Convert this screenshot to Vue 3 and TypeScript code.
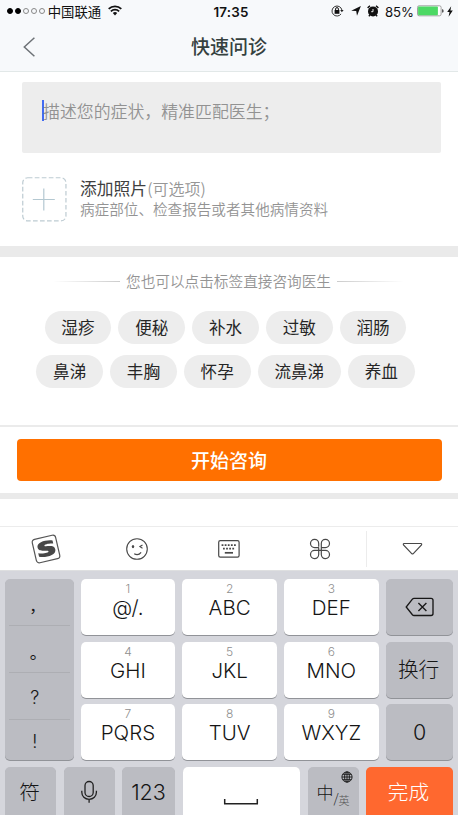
<script setup lang="ts">
interface LetterKey {
  digit: string
  label: string
}

const signal: boolean[] = [true, true, false, false, false]
const tagRows: string[][] = [
  ['湿疹', '便秘', '补水', '过敏', '润肠'],
  ['鼻涕', '丰胸', '怀孕', '流鼻涕', '养血'],
]
const punctuation: string[] = ['，', '。', '?', '!']
const letterKeys: LetterKey[] = [
  { digit: '1', label: '@/.' },
  { digit: '2', label: 'ABC' },
  { digit: '3', label: 'DEF' },
  { digit: '4', label: 'GHI' },
  { digit: '5', label: 'JKL' },
  { digit: '6', label: 'MNO' },
  { digit: '7', label: 'PQRS' },
  { digit: '8', label: 'TUV' },
  { digit: '9', label: 'WXYZ' },
]
</script>

<template>
  <div class="screen">
    <header class="top">
      <div class="status">
        <div class="status-left">
          <span class="dots"><i v-for="(on, i) in signal" :key="i" :class="{ on }"></i></span>
          <span class="carrier">中国联通</span>
          <svg class="wifi" width="14" height="11" viewBox="0 0 14 11">
            <g fill="none" stroke="#111" stroke-width="1.8">
              <path d="M.7 3.9a8.9 8.9 0 0 1 12.6 0" />
              <path d="M2.9 6.3a5.8 5.8 0 0 1 8.2 0" />
            </g>
            <path d="M4.8 8.1a3.1 3.1 0 0 1 4.4 0L7 10.4z" fill="#111" />
          </svg>
        </div>
        <span class="time">17:35</span>
        <div class="status-right">
          <svg width="13" height="12" viewBox="0 0 13 12">
            <path d="M10.1 8.9A5 5 0 1 1 10.9 5" fill="none" stroke="#222" stroke-width=".9" />
            <path d="M9.2 5h3.4L10.9 7.3z" fill="#222" />
            <rect x="3.6" y="5" width="4.8" height="3.8" fill="#111" />
            <path d="M4.6 5.4V4a1.4 1.4 0 0 1 2.8 0v1.4" fill="none" stroke="#111" stroke-width="1" />
          </svg>
          <svg class="locate" width="10" height="10" viewBox="0 0 10 10"><path d="M9.9.1 6 9.7 5.2 4.9.2 4.7z" fill="#111" /></svg>
          <svg class="alarm" width="12" height="12" viewBox="0 0 12 12">
            <circle cx="6" cy="6.4" r="5" fill="#111" />
            <path d="M.7 3A6 6 0 0 1 3.1.9M11.3 3A6 6 0 0 0 8.9.9" fill="none" stroke="#111" stroke-width="1.4" />
            <path d="M1.8 11.2l1.2-1.2M10.2 11.2 9 10" stroke="#111" stroke-width="1.4" />
            <path d="M6 4v2.7H4.2" fill="none" stroke="#fff" stroke-width=".9" />
          </svg>
          <span class="percent">85%</span>
          <svg width="27" height="12" viewBox="0 0 27 12">
            <rect x=".5" y=".8" width="23.6" height="10" rx="1.6" fill="#fff" stroke="#8c8c8c" stroke-width=".8" />
            <rect x="1.1" y="1.4" width="19.8" height="8.8" rx=".8" fill="#4cd964" />
            <path d="M25.2 4v3.8q1.4-.5 1.4-1.9T25.2 4z" fill="#333" />
          </svg>
          <svg class="bolt" width="6" height="11" viewBox="0 0 6 11"><path d="M4.2.3.2 6.1h2.3L1.6 10.7 5.8 4.6H3.4z" fill="#111" /></svg>
        </div>
      </div>
      <div class="nav">
        <svg class="back" width="14" height="22" viewBox="0 0 14 22"><path d="M12.4 1.7 2.3 11l10.1 9.3" fill="none" stroke="#6d7276" stroke-width="1.5" /></svg>
        <h1>快速问诊</h1>
      </div>
    </header>

    <section class="describe">
      <div class="input"><i class="caret"></i><span>描述您的症状，精准匹配医生；</span></div>
      <div class="photo">
        <svg width="45" height="45" viewBox="0 0 45 45" fill="none">
          <rect x=".75" y=".75" width="43.2" height="43.2" rx="5" stroke="#bdcbd2" stroke-width="1.2" stroke-dasharray="4.7 2.3" />
          <path d="M21.8 11.5v22M10.8 22.5h22" stroke="#b4c8d1" stroke-width="1.2" />
        </svg>
        <div class="photo-text">
          <p class="photo-title">添加照片<span>(可选项)</span></p>
          <p class="photo-sub">病症部位、检查报告或者其他病情资料</p>
        </div>
      </div>
    </section>

    <section class="tags">
      <div class="hint"><i class="rule"></i><span>您也可以点击标签直接咨询医生</span><i class="rule right"></i></div>
      <div v-for="(row, i) in tagRows" :key="i" class="tag-row">
        <span v-for="tag in row" :key="tag" class="tag">{{ tag }}</span>
      </div>
    </section>

    <section class="submit"><button type="button">开始咨询</button></section>
    <div class="blank"></div>

    <div class="toolbar">
      <div class="tool">
        <svg width="32" height="32" viewBox="0 0 32 32">
          <g transform="rotate(-13 16 16)">
            <rect x="4" y="4" width="24" height="24" rx="3" fill="#fff" stroke="#555" stroke-width="1.2" />
            <path d="M24.3 9.1v3.2c-3.7-1.2-9.1-1.4-9.1.2 0 1.8 9.8.2 9.8 5.8 0 6.3-11.2 6.4-17.5 3.7v-3.6c4.3 1.8 10.4 2.2 10.4.4 0-2-9.8-.5-9.8-6.1 0-5.4 9.8-6 16.2-3.6z" fill="#484848" />
          </g>
        </svg>
      </div>
      <div class="tool">
        <svg width="24" height="24" viewBox="0 0 24 24" fill="none" stroke="#484848">
          <circle cx="12" cy="12" r="10.3" stroke-width="1.1" />
          <ellipse cx="8" cy="9.6" rx="1.2" ry="1.6" fill="#484848" stroke="none" />
          <path d="M17.5 8 14.9 9.6l2.6 1.6" stroke-width="1.1" />
          <path d="M9.2 16.8q4 2.4 6.9-1.4" stroke-width="1.2" />
        </svg>
      </div>
      <div class="tool">
        <svg width="24" height="20" viewBox="0 0 24 20" fill="none" stroke="#484848">
          <rect x="1.7" y="1.7" width="20.4" height="16.4" rx="1.6" stroke-width="1.2" />
          <path d="M4.6 6.2h15" stroke-width="1.8" stroke-dasharray="1.8 1.3" />
          <path d="M6 9.6h12" stroke-width="1.8" stroke-dasharray="1.8 1.3" />
          <path d="M7.8 13.8h8.2" stroke-width="1.7" />
        </svg>
      </div>
      <div class="tool">
        <svg width="22" height="22" viewBox="0 0 22 22" fill="none" stroke="#484848" stroke-width="1.2">
          <path d="M9.7 8.8V5.4A4.1 4.1 0 1 0 5.6 9.6H9.9" />
          <path d="M12.3 9.6h4.1A4.1 4.1 0 1 0 12.3 5.4V12.5" />
          <path d="M12.3 12.4v4.2a4.1 4.1 0 1 0 4.1-4.2H5.6a4.1 4.1 0 1 0 4.1 4.2V9.6" />
        </svg>
      </div>
      <div class="tool last">
        <svg width="21" height="14" viewBox="0 0 21 14"><path d="M2 1.5h17q1 .1.5 1.4L11.3 11.6q-.8.7-1.6 0L1.5 2.9Q1 1.6 2 1.5z" fill="none" stroke="#484848" stroke-width="1.2" /></svg>
      </div>
    </div>

    <div class="keyboard">
      <div class="main-keys">
        <div class="key grey punct">
          <span v-for="mark in punctuation" :key="mark" :class="{ latin: mark === '?' || mark === '!', comma: mark === '，' }">{{ mark }}</span>
        </div>
        <div class="letters">
          <div v-for="k in letterKeys" :key="k.digit" class="key letter">
            <small>{{ k.digit }}</small>
            <b>{{ k.label }}</b>
          </div>
        </div>
        <div class="side">
          <div class="key grey">
            <svg width="30" height="22" viewBox="0 0 30 22" fill="none" stroke="#171717" stroke-width="1.35">
              <path d="M9 2.3h17q2 0 2 2v13.2q0 2-2 2H9q-.9 0-1.6-.8L1.2 11 7.4 3.1Q8.1 2.3 9 2.3zM13.4 7l8 8M21.4 7l-8 8" />
            </svg>
          </div>
          <div class="key grey cjk">换行</div>
          <div class="key grey zero">0</div>
        </div>
      </div>
      <div class="bottom-keys">
        <div class="key grey cjk">符</div>
        <div class="key grey">
          <svg width="18" height="24" viewBox="0 0 18 24" fill="none" stroke="#222" stroke-width="1.3">
            <rect x="5" y="1.5" width="8.2" height="15" rx="4.1" />
            <path d="M1.8 10.8v1.5c0 4 3 7 7.3 7s7.3-3 7.3-7v-1.5M9.1 19.3v3.4" />
          </svg>
        </div>
        <div class="key grey num">123</div>
        <div class="key space">
          <svg width="36" height="8" viewBox="0 0 36 8"><path d="M1.7 1v4.7h32.6V1" fill="none" stroke="#222" stroke-width="1.5" /></svg>
        </div>
        <div class="key grey lang">
          <span class="zh">中</span><span class="slash">/</span><span class="en">英</span>
          <svg class="globe" width="12" height="12" viewBox="0 0 12 12" fill="none" stroke="#151515" stroke-width=".9">
            <circle cx="6" cy="6" r="5.1" /><ellipse cx="6" cy="6" rx="2.4" ry="5.1" /><path d="M6 1v10M1 6h10M1.8 3.3h8.4M1.8 8.7h8.4" />
          </svg>
        </div>
        <div class="key done cjk">完成</div>
      </div>
    </div>
  </div>
</template>

<style>
body {
  margin: 0;
  overflow: hidden;
}
</style>

<style scoped>
.screen {
  width: 458px;
  height: 815px;
  overflow: hidden;
  display: flex;
  flex-direction: column;
  background: #fff;
  font-family: 'Noto Sans CJK SC', sans-serif;
}
.screen *,
.screen {
  box-sizing: border-box;
}
.screen > * {
  flex: none;
}
svg {
  display: block;
  flex: none;
}
.top {
  height: 72px;
  background: #f7f9fb;
  border-bottom: 1px solid #e2e8e8;
}
.status {
  height: 22px;
  display: grid;
  grid-template-columns: 1fr auto 1fr;
  align-items: center;
  padding: 0 5px 0 7px;
  color: #111;
}
.status-left,
.status-right {
  display: flex;
  align-items: center;
}
.status-right {
  justify-content: flex-end;
}
.dots {
  display: flex;
  gap: 1.7px;
}
.dots i {
  width: 6.2px;
  height: 6.2px;
  border-radius: 50%;
  border: 1px solid #888;
}
.dots i.on {
  background: #000;
  border-color: #000;
}
.carrier {
  margin-left: 3px;
  margin-top: -1px;
  font-size: 13.4px;
  line-height: 20px;
}
.wifi {
  margin-left: 7px;
  margin-top: -1px;
}
.time {
  font: 600 13.4px/20px Inter, sans-serif;
  letter-spacing: 0.2px;
  margin-left: 2px;
  padding-top: 1px;
}
.locate {
  margin-left: 7px;
}
.alarm {
  margin-left: 6px;
}
.percent {
  margin: 1px 3px 0 6px;
  font: 400 13.2px/20px Inter, sans-serif;
}
.bolt {
  margin-left: 3px;
}
.nav {
  height: 49px;
  display: grid;
  grid-template-columns: 40px 1fr 40px;
  align-items: center;
}
.back {
  margin-left: 22px;
}
h1 {
  margin: 0;
  padding-bottom: 2px;
  text-align: center;
  font-size: 19px;
  line-height: 28px;
  font-weight: 500;
  color: #35413f;
}
.describe {
  height: 174px;
  padding: 10px 17px 0 22px;
}
.input {
  height: 71px;
  border-radius: 2px;
  background: #ededed;
  padding: 17px 0 0 20px;
  display: flex;
  font-size: 16.9px;
  line-height: 24px;
  font-weight: 350;
  color: #929292;
}
.caret {
  width: 2px;
  height: 21px;
  margin: 1px -1px 0 0;
  background: #426bf2;
}
.photo {
  display: flex;
  gap: 13px;
  margin-top: 24px;
}
p {
  margin: 0;
}
.photo-title {
  font-size: 16.8px;
  line-height: 23px;
  color: #404040;
}
.photo-title span {
  font-size: 16px;
  color: #969696;
  font-weight: 350;
}
.photo-sub {
  font-size: 14.6px;
  line-height: 19px;
  margin-top: -1px;
  color: #939393;
  font-weight: 350;
}
.tags {
  height: 179px;
  border-top: 11px solid #eaeaea;
  padding-top: 14px;
}
.hint {
  display: flex;
  justify-content: center;
  align-items: center;
  gap: 6px;
  height: 20px;
  margin-bottom: 20px;
  padding-right: 1px;
  font-size: 14.65px;
  color: #949494;
  font-weight: 350;
}
.hint span {
  padding-bottom: 2px;
}
.rule {
  width: 67px;
  height: 1px;
  background: linear-gradient(90deg, #fff, #ccc);
}
.rule.right {
  background: linear-gradient(270deg, #fff, #ccc);
}
.tag-row {
  display: flex;
  justify-content: center;
  gap: 7px;
  height: 33px;
  margin-bottom: 11px;
  padding-right: 7px;
}
.tag {
  padding: 0 16.8px;
  border-radius: 17px;
  background: #ededed;
  color: #262626;
  font-size: 16.6px;
  line-height: 32px;
}
.submit {
  height: 74px;
  border-top: 2px solid #ebebeb;
  border-bottom: 6px solid #eaeaea;
  padding: 12px 16.5px 0;
}
button {
  display: block;
  width: 100%;
  height: 42px;
  border: 0;
  border-radius: 4px;
  background: #ff7000;
  color: #fff;
  font: 500 19px/40px 'Noto Sans CJK SC', sans-serif;
  padding: 0;
}
.blank {
  height: 27px;
}
.toolbar {
  height: 44px;
  border-top: 1px solid #ececec;
  display: grid;
  grid-template-columns: repeat(4, 91.5px) 1fr;
  align-items: center;
}
.tool {
  display: flex;
  justify-content: center;
}
.tool.last {
  height: 36px;
  align-items: center;
  border-left: 1px solid #ececec;
}
.keyboard {
  height: 245px;
  border-top: 1px solid #dedfe0;
  background: #d5d6dc;
  padding: 8px 5px 0;
}
.main-keys {
  display: grid;
  grid-template-columns: 68.5px 298px 67.5px;
  column-gap: 7.2px;
  height: 181.4px;
}
.key {
  border-radius: 5px;
  background: #fff;
  box-shadow: 0 1px 0 #919398;
  color: #151515;
  display: flex;
  align-items: center;
  justify-content: center;
}
.grey {
  background: #bbbcc2;
}
.punct {
  display: grid;
  grid-template-rows: 47px 47px 47px 1fr;
  align-items: stretch;
  justify-content: stretch;
  padding: 0 4px;
}
.punct span {
  display: flex;
  align-items: center;
  justify-content: center;
  border-bottom: 1px solid #adaeb3;
  font-size: 17px;
  line-height: 24px;
  padding: 6px 2px 0 0;
}
.punct .comma {
  font-size: 16px;
  padding-right: 4px;
}
.punct .latin {
  font: 300 18px/24px Inter, sans-serif;
  padding: 3px 9px 0 0;
}
.punct span:last-child {
  border-bottom: 0;
}
.letters,
.side {
  display: grid;
  grid-template-rows: repeat(3, 56px);
  row-gap: 6.7px;
}
.letters {
  grid-template-columns: repeat(3, 94.5px);
  column-gap: 7.2px;
}
.letter {
  flex-direction: column;
  justify-content: flex-start;
  font-family: Inter, sans-serif;
}
.letter small {
  margin-top: 2px;
  font-size: 12px;
  line-height: 15px;
  font-weight: 300;
  color: #8f8f8f;
}
.letter b {
  font-weight: 300;
  font-size: 20.5px;
  line-height: 24px;
}
.cjk {
  font-size: 20.7px;
  font-weight: 300;
  padding: 0 2px 3px 0;
}
.zero,
.num {
  font: 300 21.5px Inter, sans-serif;
}
.bottom-keys {
  display: grid;
  grid-template-columns: 51px 51px 53px 117.5px 51px 87px;
  justify-content: space-between;
  height: 56px;
  margin-top: 6.6px;
}
.bottom-keys .key {
  padding-bottom: 6px;
}
.bottom-keys .cjk {
  padding-bottom: 8px;
}
.space svg {
  margin-top: 21px;
}
.lang {
  position: relative;
  font-weight: 300;
}
.zh {
  font-size: 17px;
}
.slash {
  font-size: 13px;
  padding-top: 12px;
}
.en {
  font-size: 11px;
  padding-top: 17px;
  color: #555;
}
.globe {
  position: absolute;
  top: 4px;
  right: 6px;
}
.bottom-keys .done {
  background: #ff682f;
  color: #fff;
}
</style>
